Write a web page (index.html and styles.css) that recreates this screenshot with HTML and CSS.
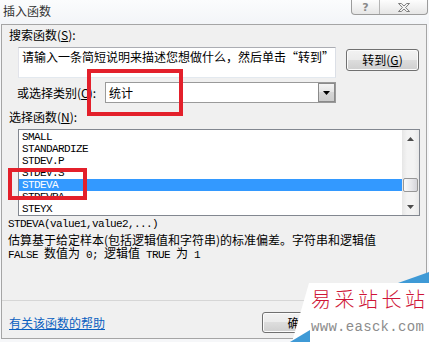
FILE: index.html
```html
<!DOCTYPE html>
<html lang="zh-CN">
<head>
<meta charset="utf-8">
<title>插入函数</title>
<link rel="stylesheet" href="styles.css">
</head>
<body>
<div class="window">
  <div class="titlebar">
    <span class="title">插入函数</span>
    <div class="caption-btns">
      <span class="cbtn help">?</span>
      <span class="cbtn close">
        <svg width="12" height="9" viewBox="0 0 12 9"><polygon points="0.5,0.5 3.3,0.5 6,3 8.7,0.5 11.5,0.5 7.6,4.5 11.5,8.5 8.7,8.5 6,6 3.3,8.5 0.5,8.5 4.4,4.5" fill="#f6f6f6" stroke="#707070" stroke-width="0.9" stroke-linejoin="round"/></svg>
      </span>
    </div>
  </div>
  <div class="dialog">
    <div class="lbl lbl-search">搜索函数(<u>S</u>):</div>
    <div class="search-row">
      <div class="textbox">请输入一条简短说明来描述您想做什么，然后单击“转到”</div>
      <div class="btn btn-go">转到(<u>G</u>)</div>
    </div>
    <div class="cat-row">
      <span class="lbl lbl-cat">或选择类别(<u>C</u>):</span>
      <div class="combo">
        <span class="combo-text">统计</span>
        <span class="combo-btn"><svg width="7" height="4" viewBox="0 0 7 4"><polygon points="0,0 7,0 3.5,4" fill="#000"/></svg></span>
      </div>
    </div>
    <div class="lbl lbl-func">选择函数(<u>N</u>):</div>
    <div class="listbox">
      <ul class="items">
        <li>SMALL</li>
        <li>STANDARDIZE</li>
        <li>STDEV.P</li>
        <li>STDEV.S</li>
        <li class="selected">STDEVA</li>
        <li>STDEVPA</li>
        <li>STEYX</li>
      </ul>
      <div class="vscroll">
        <div class="sb-arrow"><svg width="7" height="4" viewBox="0 0 7 4"><polygon points="0,4 3.5,0 7,4" fill="#4d4d4d"/></svg></div>
        <div class="sb-track"><div class="sb-thumb"></div></div>
        <div class="sb-arrow"><svg width="7" height="4" viewBox="0 0 7 4"><polygon points="0,0 7,0 3.5,4" fill="#4d4d4d"/></svg></div>
      </div>
    </div>
    <div class="desc">
      <div class="desc-sig">STDEVA(value1,value2,...)</div>
      <div class="desc-text">估算基于给定样本(包括逻辑值和字符串)的标准偏差。字符串和逻辑值</div>
      <div class="desc-text"><span class="mono">FALSE </span>数值为<span class="mono"> 0; </span>逻辑值<span class="mono"> TRUE </span>为<span class="mono"> 1</span></div>
    </div>
    <div class="sep"></div>
    <div class="footer">
      <a class="help-link" href="#">有关该函数的帮助</a>
      <div class="btn btn-ok">确定</div>
    </div>
  </div>
  <div class="mark mark-cat"></div>
  <div class="mark mark-item"></div>
  <div class="watermark">
    <svg class="wm-bg" width="141" height="72" viewBox="0 0 141 72">
      <polygon points="21,13 141,13 141,72 4,72" fill="#ffffff"/>
      <polygon points="110,13 141,2 141,13" fill="#3f9ad6"/>
      <polygon points="2,72 22,60 22,72" fill="#3f9ad6"/>
    </svg>
    <div class="wm-cn">易采站长站</div>
    <div class="wm-url">www.easck.com</div>
  </div>
</div>
</body>
</html>
```
FILE: styles.css
```css
html, body {
  margin: 0;
  padding: 0;
}
body {
  width: 429px;
  height: 342px;
  overflow: hidden;
  background: #f6f7f9;
  font-family: "Noto Sans CJK SC", "Noto Sans", sans-serif;
  font-size: 12px;
  color: #000;
}
.window {
  position: relative;
  width: 429px;
  height: 342px;
}
.titlebar {
  height: 24px;
  display: flex;
  justify-content: space-between;
  align-items: flex-start;
  background: linear-gradient(#fbfcfd, #f3f5f8);
}
.title {
  margin: 4px 0 0 3px;
  line-height: 14px;
  color: #333;
}
.caption-btns {
  display: flex;
  height: 14px;
  margin-right: 1px;
  border: 1px solid #9c9c9c;
  border-top: none;
  border-radius: 0 0 4px 4px;
  background: linear-gradient(#fdfdfd, #e6e6e6);
}
.cbtn {
  display: flex;
  align-items: center;
  justify-content: center;
  height: 14px;
}
.help {
  width: 27px;
  border-right: 1px solid #b4b4b4;
  color: #8a8a8a;
  font: bold 11px "DejaVu Sans", sans-serif;
}
.close {
  width: 47px;
}
.dialog {
  margin-left: 1px;
  width: 426px;
  height: 315px;
  box-sizing: border-box;
  border: 1px solid #a5a5a5;
  background: #f0f0f0;
  display: flex;
  flex-direction: column;
}
.lbl {
  line-height: 14px;
  white-space: nowrap;
}
.lbl-search {
  margin: 3px 0 0 7px;
}
.search-row {
  display: flex;
  align-items: flex-start;
  margin: 5px 0 0 16px;
}
.textbox {
  width: 318px;
  height: 31px;
  box-sizing: border-box;
  border: 1px solid #abadb3;
  border-color: #abadb3 #dbdfe6 #e3e9ef #e2e3ea;
  background: #fff;
  padding: 2px 0 0 3px;
  line-height: 14px;
  white-space: nowrap;
  overflow: hidden;
}
.btn {
  box-sizing: border-box;
  border: 1px solid #707070;
  border-radius: 3px;
  background: linear-gradient(#f2f2f2 0%, #ebebeb 50%, #dddddd 50%, #cfcfcf 100%);
  box-shadow: inset 0 0 0 1px #fbfbfb;
  display: flex;
  align-items: center;
  justify-content: center;
  line-height: 14px;
  white-space: nowrap;
}
.btn-go {
  margin: 2px 0 0 10px;
  width: 73px;
  height: 22px;
}
.cat-row {
  display: flex;
  align-items: center;
  height: 21px;
  margin: 4px 0 0 15px;
}
.lbl-cat {
  width: 88px;
}
.combo {
  width: 231px;
  height: 21px;
  box-sizing: border-box;
  border: 1px solid #9a9a9a;
  background: #fff;
  display: flex;
  align-items: stretch;
}
.combo-text {
  flex: 1;
  padding-left: 3px;
  line-height: 19px;
}
.combo-btn {
  width: 17px;
  box-sizing: border-box;
  border: 1px solid #8a8a8a;
  background: linear-gradient(#f4f4f4, #e4e4e4 50%, #d6d6d6 50%, #cccccc);
  display: flex;
  align-items: center;
  justify-content: center;
}
.lbl-func {
  margin: 7px 0 0 7px;
}
.listbox {
  margin: 5px 0 0 16px;
  width: 402px;
  height: 87px;
  box-sizing: border-box;
  border: 1px solid #828790;
  background: #fff;
  display: flex;
}
.items {
  flex: 1;
  list-style: none;
  margin: 0;
  padding: 1px 0 0 0;
  overflow: hidden;
}
.items li {
  height: 12px;
  line-height: 12px;
  padding-left: 3px;
  font-family: "Liberation Mono", monospace;
  font-size: 11px;
  letter-spacing: -0.6px;
  white-space: nowrap;
  overflow: hidden;
}
.items li.selected {
  background: #3399ff;
  color: #fff;
}
.vscroll {
  width: 17px;
  display: flex;
  flex-direction: column;
  background: linear-gradient(90deg, #e6e6e6, #f3f3f3 30%, #f3f3f3 70%, #e8e8e8);
}
.sb-arrow {
  height: 17px;
  display: flex;
  align-items: center;
  justify-content: center;
}
.sb-track {
  flex: 1;
  padding: 31px 1px 0 1px;
}
.sb-thumb {
  height: 14px;
  box-sizing: border-box;
  border: 1px solid #979797;
  border-radius: 2px;
  background: linear-gradient(90deg, #fafafa, #e6e6ea 60%, #d4d4da);
}
.desc {
  margin: 2px 0 0 6px;
}
.desc-sig {
  line-height: 12px;
  font-family: "Liberation Mono", monospace;
  font-size: 11px;
  letter-spacing: -0.6px;
  white-space: nowrap;
}
.desc-text {
  line-height: 13px;
  white-space: nowrap;
}
.desc-sig + .desc-text {
  margin-top: 3px;
}
.mono {
  font-family: "Liberation Mono", monospace;
  font-size: 11px;
  letter-spacing: -0.6px;
  white-space: pre;
}
.sep {
  margin-top: auto;
  border-top: 1px solid #d6d6d6;
}
.footer {
  height: 37px;
  box-sizing: border-box;
  padding: 11px 0 0 7px;
  display: flex;
  align-items: flex-start;
}
.help-link {
  line-height: 21px;
  color: #0a5fc0;
  text-decoration: underline;
}
.btn-ok {
  margin-left: 157px;
  width: 75px;
  height: 21px;
}
.mark {
  position: absolute;
  box-sizing: border-box;
  border: 4px solid #e3202b;
}
.mark-cat {
  left: 87px;
  top: 69px;
  width: 96px;
  height: 47px;
}
.mark-item {
  left: 8px;
  top: 168px;
  width: 79px;
  height: 32px;
}
.watermark {
  position: absolute;
  left: 288px;
  top: 270px;
  width: 141px;
  height: 72px;
  box-sizing: border-box;
  padding: 17px 0 0 23px;
}
.wm-bg {
  position: absolute;
  left: 0;
  top: 0;
}
.wm-cn {
  position: relative;
  width: 114px;
  font-size: 20px;
  font-weight: 300;
  line-height: 24px;
  letter-spacing: 3.5px;
  color: #cf1537;
  white-space: nowrap;
}
.wm-url {
  position: relative;
  width: 114px;
  margin-top: 8px;
  font-family: "Liberation Mono", monospace;
  font-size: 14px;
  line-height: 16px;
  letter-spacing: 0.3px;
  color: #8c8c8c;
  white-space: nowrap;
}
```
